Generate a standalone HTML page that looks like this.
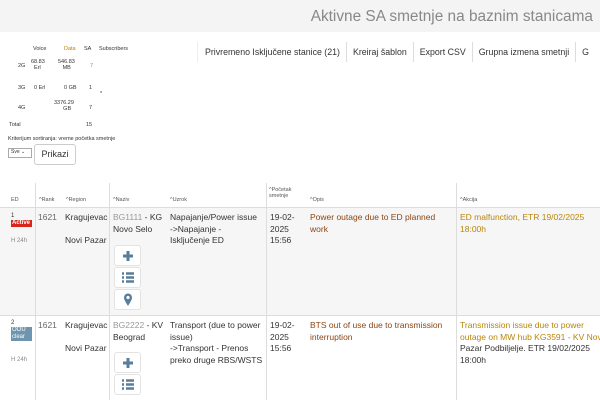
<!DOCTYPE html>
<html><head><meta charset="utf-8"><style>
*{box-sizing:border-box;margin:0;padding:0}
body{width:600px;height:400px;overflow:hidden;background:#fff;font-family:"Liberation Sans",sans-serif;color:#333;position:relative}
.hdr{position:absolute;left:0;top:0;width:600px;height:32px;background:#f4f4f4}
.hdr h1{position:absolute;right:7px;top:8px;font-size:15.4px;font-weight:normal;color:#888;white-space:nowrap}
.btns{position:absolute;top:42px;left:197px;width:403px;overflow:hidden;display:flex;font-size:8.8px;white-space:nowrap}
.btns div{padding:4px 6px;border-left:1px solid #ddd;height:20px;line-height:12px}
.st{position:absolute;font-size:5.5px;color:#333;white-space:nowrap}
.o{color:#b8860b}
.b{color:#5b9bd5}
.t{position:absolute;font-size:8.5px;line-height:11.5px}
.v{position:absolute;top:183px;width:1px;height:217px;background:#ddd}
.h{position:absolute;left:0;width:600px;height:1px;background:#ddd}
.ib{position:absolute;left:114px;width:27px;height:21px;border:1px solid #e3e3e3;border-radius:3px;background:#fff;display:flex;align-items:center;justify-content:center}
.th{position:absolute;top:197px;font-size:5.5px;color:#555}
.bd{display:block;color:#fff;font-size:6px;line-height:7px;padding:0 1px}
</style></head><body>
<div class="hdr"><h1>Aktivne SA smetnje na baznim stanicama</h1></div>
<div class="btns"><div style="border-left:1px solid #eee;padding-left:7px">Privremeno Isključene stanice (21)</div><div>Kreiraj šablon</div><div>Export CSV</div><div>Grupna izmena smetnji</div><div>G</div></div>
<div class="st" style="left:33px;top:46px">Voice</div><div class="st o" style="left:64px;top:46px">Data</div><div class="st" style="left:84px;top:46px">SA</div><div class="st" style="left:99px;top:46px">Subscribers</div>
<div class="st" style="left:18px;top:63px">2G</div><div class="st" style="left:31px;top:59px">68.83<br>&nbsp;&nbsp;Erl</div><div class="st" style="left:58px;top:59px">546.83<br>&nbsp;&nbsp;&nbsp;MB</div><div class="st b" style="left:90px;top:63px">7</div>
<div class="st" style="left:18px;top:85px">3G</div><div class="st" style="left:34px;top:85px">0 Erl</div><div class="st" style="left:64px;top:85px">0 GB</div><div class="st" style="left:89px;top:85px">1</div><div class="st" style="left:100px;top:91px">*</div>
<div class="st" style="left:18px;top:105px">4G</div><div class="st" style="left:54px;top:100px">3376.29<br>&nbsp;&nbsp;&nbsp;&nbsp;&nbsp;&nbsp;GB</div><div class="st" style="left:89px;top:105px">7</div>
<div class="st" style="left:9px;top:122px">Total</div><div class="st" style="left:86px;top:122px">15</div>
<div class="st" style="left:8px;top:136px">Kriterijum sortiranja: vreme početka smetnje</div>
<div style="position:absolute;left:8px;top:148px;width:24px;height:10px;border:1px solid #aaa;font-size:5px;padding-left:2px">Sve ⌄</div>
<div style="position:absolute;left:34px;top:144px;width:42px;height:21px;border:1px solid #ccc;border-radius:3px;font-size:9px;text-align:center;line-height:19px">Prikazi</div>
<div style="position:absolute;left:0;top:207px;width:600px;height:108px;background:#f6f6f6"></div>
<div class="h" style="top:207px"></div><div class="h" style="top:315px"></div>
<div class="v" style="left:35px"></div><div class="v" style="left:109px"></div><div class="v" style="left:266px"></div><div class="v" style="left:456px"></div>
<div class="th" style="left:11px">ED</div><div class="th b" style="left:39px">^Rank</div><div class="th" style="left:66px">^Region</div><div class="th" style="left:113px">^Naziv</div><div class="th" style="left:170px">^Uzrok</div><div class="th" style="left:269px;top:187px">^Početak<br>smetnje</div><div class="th" style="left:310px">^Opis</div><div class="th" style="left:460px">^Akcija</div>
<div class="t" style="left:11px;top:212px;font-size:6px;line-height:8px;width:22px">1<span class="bd" style="background:#d9261c;font-weight:bold;width:21px">Active</span></div>
<div class="t" style="left:11px;top:236px;font-size:6px;color:#888">H 24h</div>
<div class="t" style="left:38px;top:212px;color:#666">1621</div>
<div class="t" style="left:65px;top:212px;line-height:11.5px">Kragujevac<br><br>Novi Pazar</div>
<div class="t" style="left:113px;top:212px"><span style="color:#999">BG1111</span> - KG<br>Novo Selo</div>
<div class="t" style="left:170px;top:212px">Napajanje/Power issue<br>-&gt;Napajanje -<br>Isključenje ED</div>
<div class="t" style="left:270px;top:212px">19-02-<br>2025<br>15:56</div>
<div class="t" style="left:310px;top:212px;color:#8b4513">Power outage due to ED planned<br>work</div>
<div class="t" style="left:460px;top:212px;color:#b8860b">ED malfunction, ETR 19/02/2025<br>18:00h</div>
<div class="ib" style="top:245px"><svg width="12" height="12"><path d="M6 1v10M1 6h10" stroke="#5a7e9a" stroke-width="3"/></svg></div>
<div class="ib" style="top:267px"><svg width="12" height="11"><path d="M0 1.5h2M4 1.5h8M0 5.5h2M4 5.5h8M0 9.5h2M4 9.5h8" stroke="#5a7e9a" stroke-width="2.5"/></svg></div>
<div class="ib" style="top:289px"><svg width="10" height="13"><path d="M5 13C2 8 1 6.5 1 4.5a4 4 0 0 1 8 0C9 6.5 8 8 5 13z" fill="#5a7e9a"/><circle cx="5" cy="4.5" r="1.6" fill="#fff"/></svg></div>
<div class="t" style="left:11px;top:320px;font-size:6px;line-height:7px;width:22px">2<span class="bd" style="background:#6e95ad;width:21px">OOU clear</span></div>
<div class="t" style="left:11px;top:355px;font-size:6px;color:#888">H 24h</div>
<div class="t" style="left:38px;top:320px;color:#666">1621</div>
<div class="t" style="left:65px;top:320px">Kragujevac<br><br>Novi Pazar</div>
<div class="t" style="left:113px;top:320px"><span style="color:#999">BG2222</span> - KV<br>Beograd</div>
<div class="t" style="left:170px;top:320px">Transport (due to power<br>issue)<br>-&gt;Transport - Prenos<br>preko druge RBS/WSTS</div>
<div class="t" style="left:270px;top:320px">19-02-<br>2025<br>15:56</div>
<div class="t" style="left:310px;top:320px;color:#8b4513">BTS out of use due to transmission<br>interruption</div>
<div class="t" style="left:460px;top:320px;color:#b8860b;white-space:nowrap">Transmission issue due to power<br>outage on MW hub KG3591 - KV Novi<br><span style="color:#333">Pazar Podbiljelje. ETR 19/02/2025<br>18:00h</span></div>
<div class="ib" style="top:352px"><svg width="12" height="12"><path d="M6 1v10M1 6h10" stroke="#5a7e9a" stroke-width="3"/></svg></div>
<div class="ib" style="top:374px"><svg width="12" height="11"><path d="M0 1.5h2M4 1.5h8M0 5.5h2M4 5.5h8M0 9.5h2M4 9.5h8" stroke="#5a7e9a" stroke-width="2.5"/></svg></div>
</body></html>
